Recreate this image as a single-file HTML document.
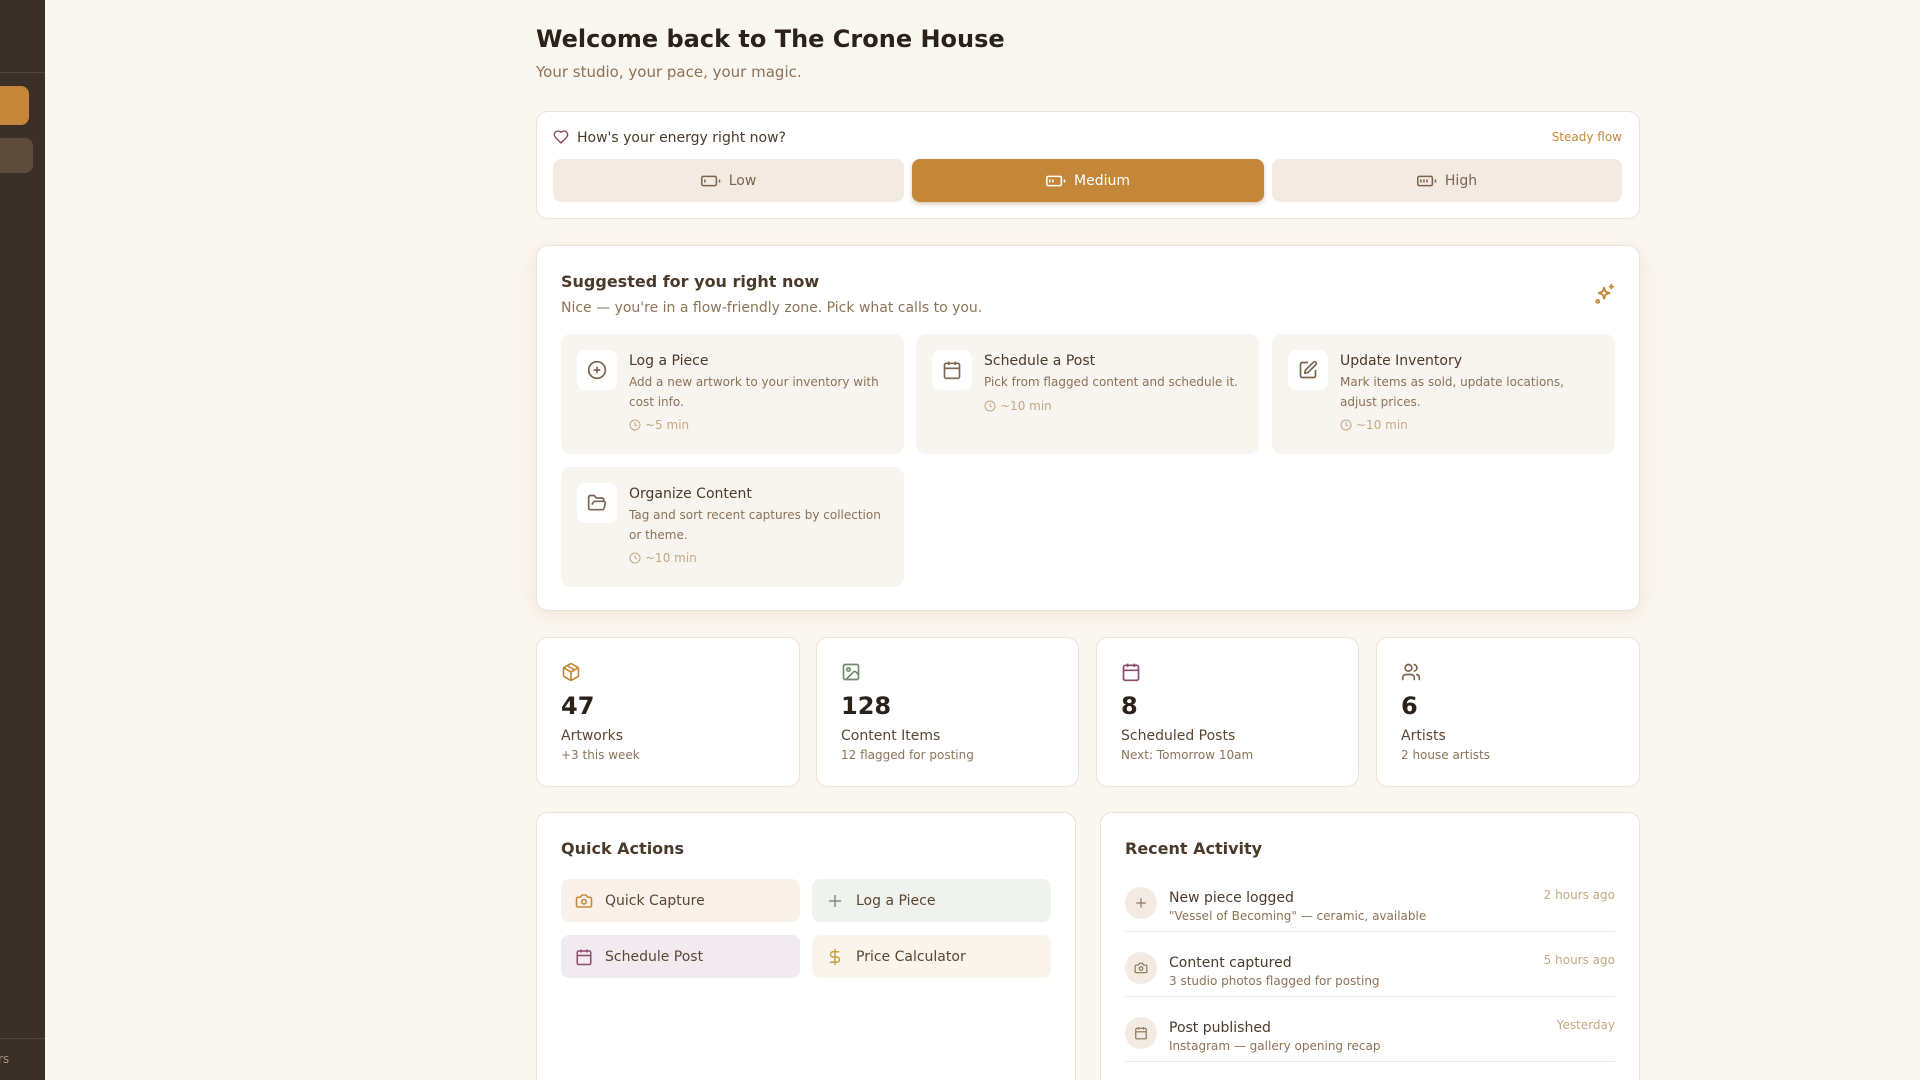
<!DOCTYPE html>
<html><head><meta charset="utf-8"><style>
*{box-sizing:border-box;margin:0;padding:0}
html,body{width:1920px;height:1080px;overflow:hidden}
body{background:#faf6f0;font-family:"DejaVu Sans","Liberation Sans",sans-serif;color:#2b2118}
#w{position:relative;width:1920px;height:1080px;overflow:hidden}
.abs{position:absolute}
.card{position:absolute;background:#fff;border:1px solid #ece2d6;border-radius:12px}
.t{position:absolute;white-space:nowrap;line-height:1}
svg{display:block}
.btn{position:absolute;top:159px;height:43px;border-radius:8px;background:#f3ebe1;color:#7a6450;font-size:14px;display:flex;align-items:center;justify-content:center;gap:8px}
.tile{position:absolute;background:#f8f4ef;border-radius:10px}
.tile .ib{position:absolute;left:16px;top:16px;width:40px;height:40px;background:#fff;border-radius:8px;display:flex;align-items:center;justify-content:center}
.tile .tt{position:absolute;left:68px;top:19px;font-size:14px;color:#4a3a2a;white-space:nowrap}
.tile .td{position:absolute;left:68px;top:38px;font-size:12px;line-height:20px;color:#8b7358;width:260px}
.tile .tm{position:absolute;left:68px;font-size:12px;color:#c4a882;display:flex;align-items:center;gap:4px}
.stat{position:absolute;top:637px;height:150px;background:#fff;border:1px solid #ece2d6;border-radius:12px}
.stat .ic{position:absolute;left:24px;top:24px}
.qa{position:absolute;width:239px;height:43px;border-radius:8px;display:flex;align-items:center;padding-left:14px;gap:12px;font-size:14px;color:#5a4632}
.act{position:absolute;left:1125px;width:490px;height:45px;border-bottom:1px solid #f0e8de}
.act .c{position:absolute;left:0;top:0;width:32px;height:32px;border-radius:50%;background:#f3ebe1;display:flex;align-items:center;justify-content:center}
.act .a1{position:absolute;left:44px;top:3px;font-size:14px;color:#4a3a2a;white-space:nowrap}
.act .a2{position:absolute;left:44px;top:22px;font-size:12px;color:#8b7358;white-space:nowrap}
.act .a3{position:absolute;right:0;top:1px;font-size:12px;color:#c4a882;white-space:nowrap}
</style></head><body><div id="w">
<div class="abs" style="left:0;top:0;width:45px;height:1080px;background:#3b3028"></div>
<div class="abs" style="left:0;top:72px;width:45px;height:1px;background:#54463a"></div>
<div class="abs" style="left:0;top:86px;width:29px;height:39px;background:#c4873a;border-radius:0 8px 8px 0"></div>
<div class="abs" style="left:0;top:138px;width:33px;height:35px;background:#5e4c3b;border-radius:0 8px 8px 0"></div>
<div class="abs" style="left:0;top:1038px;width:45px;height:1px;background:#54463a"></div>
<div class="t" style="left:-2px;top:1053px;font-size:12px;color:#a8927c">rs</div>

<div class="t" style="left:536px;top:27px;font-size:24px;font-weight:bold;color:#2b2118">Welcome back to The Crone House</div>
<div class="t" style="left:536px;top:65px;font-size:15px;color:#8b7358">Your studio, your pace, your magic.</div>

<div class="card" style="left:536px;top:111px;width:1104px;height:108px"></div>
<svg class="abs" style="left:553px;top:129px" width="16" height="16" viewBox="0 0 24 24" fill="none" stroke="#8a3f5c" stroke-width="2" stroke-linecap="round" stroke-linejoin="round"><path d="M19 14c1.49-1.46 3-3.21 3-5.5A5.5 5.5 0 0 0 16.5 3c-1.76 0-3 .5-4.5 2-1.5-1.5-2.74-2-4.5-2A5.5 5.5 0 0 0 2 8.5c0 2.3 1.5 4.05 3 5.5l7 7Z"/></svg>
<div class="t" style="left:577px;top:131px;font-size:14px;color:#4a3a2a">How's your energy right now?</div>
<div class="t" style="left:1500px;top:131px;width:122px;text-align:right;font-size:12px;color:#c4873a">Steady flow</div>
<div class="btn" style="left:553px;width:351px"><svg width="20" height="14" viewBox="0 0 26 16" fill="none" stroke="#7a6450" stroke-width="2"><rect x="1" y="2" width="19" height="12" rx="2"/><path d="M24 6v4M5 6v4"/></svg>Low</div>
<div class="btn" style="left:912px;width:352px;background:#c4873a;color:#fff;box-shadow:0 2px 5px rgba(150,100,40,.35)"><svg width="20" height="14" viewBox="0 0 26 16" fill="none" stroke="#fff" stroke-width="2"><rect x="1" y="2" width="19" height="12" rx="2"/><path d="M24 6v4M5 6v4M9 6v4"/></svg>Medium</div>
<div class="btn" style="left:1272px;width:350px"><svg width="20" height="14" viewBox="0 0 26 16" fill="none" stroke="#7a6450" stroke-width="2"><rect x="1" y="2" width="19" height="12" rx="2"/><path d="M24 6v4M5 6v4M9 6v4M13 6v4"/></svg>High</div>

<div class="card" style="left:536px;top:245px;width:1104px;height:366px;box-shadow:0 4px 18px rgba(200,160,110,.18)"></div>
<div class="t" style="left:561px;top:274px;font-size:16px;font-weight:bold;color:#4a3a2a">Suggested for you right now</div>
<div class="t" style="left:561px;top:301px;font-size:14px;color:#8b7358">Nice — you're in a flow-friendly zone. Pick what calls to you.</div>
<svg class="abs" style="left:1594px;top:283px" width="22" height="22" viewBox="0 0 24 24" fill="none" stroke="#c4873a" stroke-width="2" stroke-linecap="round" stroke-linejoin="round"><path d="M11 5l1.6 4.4L17 11l-4.4 1.6L11 17l-1.6-4.4L5 11l4.4-1.6z"/><path d="M19 2v4M17 4h4"/><circle cx="4" cy="20" r="1.5"/></svg>

<div class="tile" style="left:561px;top:334px;width:343px;height:120px"><div class="ib"><svg width="20" height="20" viewBox="0 0 24 24" fill="none" stroke="#7a6450" stroke-width="2"><circle cx="12" cy="12" r="10"/><path d="M12 8v8M8 12h8"/></svg></div><div class="tt">Log a Piece</div><div class="td">Add a new artwork to your inventory with cost info.</div><div class="tm" style="top:84px"><svg width="12" height="12" viewBox="0 0 24 24" fill="none" stroke="#c4a882" stroke-width="2"><circle cx="12" cy="12" r="10"/><path d="M12 6v6l4 2"/></svg>~5 min</div></div>
<div class="tile" style="left:916px;top:334px;width:343px;height:120px"><div class="ib"><svg width="20" height="20" viewBox="0 0 24 24" fill="none" stroke="#7a6450" stroke-width="2"><rect x="3" y="4" width="18" height="18" rx="2"/><path d="M16 2v4M8 2v4M3 10h18"/></svg></div><div class="tt">Schedule a Post</div><div class="td">Pick from flagged content and schedule it.</div><div class="tm" style="top:65px"><svg width="12" height="12" viewBox="0 0 24 24" fill="none" stroke="#c4a882" stroke-width="2"><circle cx="12" cy="12" r="10"/><path d="M12 6v6l4 2"/></svg>~10 min</div></div>
<div class="tile" style="left:1272px;top:334px;width:343px;height:120px"><div class="ib"><svg width="20" height="20" viewBox="0 0 24 24" fill="none" stroke="#7a6450" stroke-width="2" stroke-linejoin="round"><path d="M12 3H5a2 2 0 0 0-2 2v14a2 2 0 0 0 2 2h14a2 2 0 0 0 2-2v-7"/><path d="M18.4 2.6a2.1 2.1 0 0 1 3 3L12 15l-4 1 1-4z"/></svg></div><div class="tt">Update Inventory</div><div class="td">Mark items as sold, update locations, adjust prices.</div><div class="tm" style="top:84px"><svg width="12" height="12" viewBox="0 0 24 24" fill="none" stroke="#c4a882" stroke-width="2"><circle cx="12" cy="12" r="10"/><path d="M12 6v6l4 2"/></svg>~10 min</div></div>
<div class="tile" style="left:561px;top:467px;width:343px;height:120px"><div class="ib"><svg width="20" height="20" viewBox="0 0 24 24" fill="none" stroke="#7a6450" stroke-width="2" stroke-linejoin="round"><path d="M6 14l1.5-2.9A2 2 0 0 1 9.2 10H20a2 2 0 0 1 1.9 2.5l-1.5 6A2 2 0 0 1 18.5 20H4a2 2 0 0 1-2-2V5a2 2 0 0 1 2-2h3.9a2 2 0 0 1 1.7.9l.8 1.2a2 2 0 0 0 1.7.9H18a2 2 0 0 1 2 2v2"/></svg></div><div class="tt">Organize Content</div><div class="td">Tag and sort recent captures by collection or theme.</div><div class="tm" style="top:84px"><svg width="12" height="12" viewBox="0 0 24 24" fill="none" stroke="#c4a882" stroke-width="2"><circle cx="12" cy="12" r="10"/><path d="M12 6v6l4 2"/></svg>~10 min</div></div>

<div class="stat" style="left:536px;width:264px"><svg class="ic" width="20" height="20" viewBox="0 0 24 24" fill="none" stroke="#c4873a" stroke-width="2" stroke-linejoin="round"><path d="M21 8a2 2 0 0 0-1-1.7l-7-4a2 2 0 0 0-2 0l-7 4A2 2 0 0 0 3 8v8a2 2 0 0 0 1 1.7l7 4a2 2 0 0 0 2 0l7-4a2 2 0 0 0 1-1.7Z"/><path d="M3.3 7L12 12l8.7-5M12 22V12M7.5 4.3l9 5.2"/></svg>
<div class="t" style="left:24px;top:56px;font-size:24px;font-weight:bold">47</div><div class="t" style="left:24px;top:91px;font-size:14px;color:#5a4632">Artworks</div><div class="t" style="left:24px;top:111px;font-size:12px;color:#8b7358">+3 this week</div></div>
<div class="stat" style="left:816px;width:263px"><svg class="ic" width="20" height="20" viewBox="0 0 24 24" fill="none" stroke="#6f8a6a" stroke-width="2"><rect x="3" y="3" width="18" height="18" rx="2"/><circle cx="9" cy="9" r="2"/><path d="M21 15l-3-3a2 2 0 0 0-3 0L6 21"/></svg>
<div class="t" style="left:24px;top:56px;font-size:24px;font-weight:bold">128</div><div class="t" style="left:24px;top:91px;font-size:14px;color:#5a4632">Content Items</div><div class="t" style="left:24px;top:111px;font-size:12px;color:#8b7358">12 flagged for posting</div></div>
<div class="stat" style="left:1096px;width:263px"><svg class="ic" width="20" height="20" viewBox="0 0 24 24" fill="none" stroke="#8a4a6c" stroke-width="2"><rect x="3" y="4" width="18" height="18" rx="2"/><path d="M16 2v4M8 2v4M3 10h18"/></svg>
<div class="t" style="left:24px;top:56px;font-size:24px;font-weight:bold">8</div><div class="t" style="left:24px;top:91px;font-size:14px;color:#5a4632">Scheduled Posts</div><div class="t" style="left:24px;top:111px;font-size:12px;color:#8b7358">Next: Tomorrow 10am</div></div>
<div class="stat" style="left:1376px;width:264px"><svg class="ic" width="20" height="20" viewBox="0 0 24 24" fill="none" stroke="#7a6450" stroke-width="2" stroke-linecap="round"><path d="M16 21v-2a4 4 0 0 0-4-4H6a4 4 0 0 0-4 4v2"/><circle cx="9" cy="7" r="4"/><path d="M22 21v-2a4 4 0 0 0-3-3.9M16 3.1a4 4 0 0 1 0 7.8"/></svg>
<div class="t" style="left:24px;top:56px;font-size:24px;font-weight:bold">6</div><div class="t" style="left:24px;top:91px;font-size:14px;color:#5a4632">Artists</div><div class="t" style="left:24px;top:111px;font-size:12px;color:#8b7358">2 house artists</div></div>

<div class="card" style="left:536px;top:812px;width:540px;height:320px"></div>
<div class="t" style="left:561px;top:841px;font-size:16px;font-weight:bold;color:#4a3a2a">Quick Actions</div>
<div class="qa" style="left:561px;top:879px;background:#faf1ea"><svg width="18" height="18" viewBox="0 0 24 24" fill="none" stroke="#c4873a" stroke-width="2" stroke-linejoin="round"><path d="M14.5 4h-5L7 7H4a2 2 0 0 0-2 2v9a2 2 0 0 0 2 2h16a2 2 0 0 0 2-2V9a2 2 0 0 0-2-2h-3z"/><circle cx="12" cy="13" r="3"/></svg>Quick Capture</div>
<div class="qa" style="left:812px;top:879px;background:#f0f2ee"><svg width="18" height="18" viewBox="0 0 24 24" fill="none" stroke="#7d8f78" stroke-width="2"><path d="M12 4v16M4 12h16"/></svg>Log a Piece</div>
<div class="qa" style="left:561px;top:935px;background:#f1eaee"><svg width="18" height="18" viewBox="0 0 24 24" fill="none" stroke="#8a4a6c" stroke-width="2"><rect x="3" y="4" width="18" height="18" rx="2"/><path d="M16 2v4M8 2v4M3 10h18"/></svg>Schedule Post</div>
<div class="qa" style="left:812px;top:935px;background:#faf5ec"><svg width="18" height="18" viewBox="0 0 24 24" fill="none" stroke="#c9a040" stroke-width="2" stroke-linecap="round"><path d="M12 2v20M17 5H9.5a3.5 3.5 0 0 0 0 7h5a3.5 3.5 0 0 1 0 7H6"/></svg>Price Calculator</div>

<div class="card" style="left:1100px;top:812px;width:540px;height:320px"></div>
<div class="t" style="left:1125px;top:841px;font-size:16px;font-weight:bold;color:#4a3a2a">Recent Activity</div>
<div class="act" style="top:887px"><div class="c"><svg width="14" height="14" viewBox="0 0 24 24" fill="none" stroke="#8b7358" stroke-width="2"><path d="M12 4v16M4 12h16"/></svg></div><div class="a1">New piece logged</div><div class="a2">"Vessel of Becoming" — ceramic, available</div><div class="a3">2 hours ago</div></div>
<div class="act" style="top:952px"><div class="c"><svg width="14" height="14" viewBox="0 0 24 24" fill="none" stroke="#8b7358" stroke-width="2"><path d="M14.5 4h-5L7 7H4a2 2 0 0 0-2 2v9a2 2 0 0 0 2 2h16a2 2 0 0 0 2-2V9a2 2 0 0 0-2-2h-3z"/><circle cx="12" cy="13" r="3"/></svg></div><div class="a1">Content captured</div><div class="a2">3 studio photos flagged for posting</div><div class="a3">5 hours ago</div></div>
<div class="act" style="top:1017px"><div class="c"><svg width="14" height="14" viewBox="0 0 24 24" fill="none" stroke="#8b7358" stroke-width="2"><rect x="3" y="4" width="18" height="18" rx="2"/><path d="M16 2v4M8 2v4M3 10h18"/></svg></div><div class="a1">Post published</div><div class="a2">Instagram — gallery opening recap</div><div class="a3">Yesterday</div></div>
</div></body></html>
